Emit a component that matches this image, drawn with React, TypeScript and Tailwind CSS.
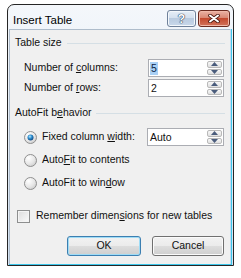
import React from 'react'

const FONT = "font-['Liberation_Sans',Arial,sans-serif]"

function Arrow({ up }: { up?: boolean }) {
  return (
    <svg width="7" height="4" viewBox="0 0 7 4">
      <path d={up ? 'M0 4 L3.5 0 L7 4 Z' : 'M0 0 L3.5 4 L7 0 Z'} fill="#4a5c7c" />
    </svg>
  )
}

function Spin({ value, selected, wide }: { value: string; selected?: boolean; wide?: boolean }) {
  return (
    <div className={`flex h-[18px] border border-[#abadb3] bg-white ${wide ? 'w-[77px]' : 'w-[76px]'}`}>
      <div className="flex flex-1 items-center pl-[1px]">
        <span className={selected ? 'bg-[#a9d0f5] px-[1px] leading-[13px] text-[#0b1f46]' : 'px-[1px] leading-[13px]'}>{value}</span>
      </div>
      <div className="flex w-[16px] flex-col gap-[1px] py-[1px] pr-[1px]">
        <div className="flex flex-1 items-center justify-center rounded-[2px] border border-[#b9b9b9] bg-gradient-to-b from-[#f8f8f8] to-[#e0e0e0]">
          <Arrow up />
        </div>
        <div className="flex flex-1 items-center justify-center rounded-[2px] border border-[#b9b9b9] bg-gradient-to-b from-[#f8f8f8] to-[#e0e0e0]">
          <Arrow />
        </div>
      </div>
    </div>
  )
}

function GroupHeader({ children }: { children: React.ReactNode }) {
  return (
    <div className="flex h-[14px] items-center gap-[5px] pl-[5px] pr-[5px]">
      <span>{children}</span>
      <div className="h-px flex-1 bg-[#d5dfe5]" />
    </div>
  )
}

function Radio({ checked }: { checked?: boolean }) {
  const id = checked ? 'rOn' : 'rOff'
  return (
    <svg width="13" height="13" viewBox="0 0 13 13">
      <defs>
        <radialGradient id={id + 'bg'} cx="0.35" cy="0.3" r="0.8">
          <stop offset="0" stopColor="#ffffff" />
          <stop offset="0.6" stopColor="#e6e6e6" />
          <stop offset="1" stopColor="#c9c9c9" />
        </radialGradient>
        <radialGradient id={id + 'dot'} cx="0.4" cy="0.35" r="0.7">
          <stop offset="0" stopColor="#b6e8fb" />
          <stop offset="0.45" stopColor="#2e8fd0" />
          <stop offset="1" stopColor="#0c3f78" />
        </radialGradient>
      </defs>
      <circle cx="6.5" cy="6.5" r="6" fill={`url(#${id}bg)`} stroke="#8f8f8f" />
      {checked && <circle cx="6.5" cy="6.5" r="3" fill={`url(#${id}dot)`} />}
    </svg>
  )
}

function U({ children }: { children: React.ReactNode }) {
  return <span className="underline underline-offset-[1px]">{children}</span>
}

export default function App() {
  return (
    <div className={`h-[278px] w-[241px] bg-white pl-[7px] pt-[4px] text-[10.5px] text-[#111] ${FONT}`}>
      <div className="flex h-[262px] w-[227px] flex-col rounded-t-[7px] border border-[#262626] bg-gradient-to-b from-[#f4f7fb] to-[#d3e2f2]">
        {/* Title bar */}
        <div className="flex h-[24px] items-start justify-between pl-[5px] pr-[3px]">
          <span className="mt-[8px] text-[11.5px] leading-[14px] text-black">Insert Table</span>
          <div className="mt-[5px] flex gap-[2px]">
            <div className="flex h-[17px] w-[29px] items-center justify-center rounded-[3px] border border-[#6f819a] bg-[linear-gradient(#e6eef7,#d2dfee_50%,#b9cbe0_50%,#c9d8ea)] shadow-[inset_0_0_0_1px_#f3f7fb]">
              <span className="text-[12px] font-bold leading-[12px] text-white [text-shadow:0_0_1px_#2c3e57,0_0_1px_#2c3e57,0_0_1px_#2c3e57]">?</span>
            </div>
            <div className="flex h-[17px] w-[32px] items-center justify-center rounded-[3px] border border-[#6b2a1f] bg-[linear-gradient(#eab2a4,#d8846f_50%,#c44a2f_50%,#d2735a)] shadow-[inset_0_0_0_1px_#f0b8a8]">
              <svg width="12" height="9" viewBox="0 0 12 9">
                <path d="M2 1.5 L10 7.5 M10 1.5 L2 7.5" stroke="#4a1810" strokeWidth="3.6" strokeLinecap="round" />
                <path d="M2 1.5 L10 7.5 M10 1.5 L2 7.5" stroke="#ffffff" strokeWidth="2" strokeLinecap="round" />
              </svg>
            </div>
          </div>
        </div>

        {/* Client area */}
        <div className="flex flex-1 pl-[1px] pr-[1px]">
          <div className="flex flex-1 border-b border-r border-[#3cc6ea] bg-[#c3dbf0] pr-[1px]">
            <div className="flex flex-1 flex-col border-l border-t border-[#aebccb] bg-[#f0f0f0]">
              <div className="mt-[6px]">
                <GroupHeader>Table size</GroupHeader>
              </div>
              <div className="mt-[9px] flex items-center justify-between pl-[14px] pr-[6px]">
                <span>Number of <U>c</U>olumns:</span>
                <Spin value="5" selected />
              </div>
              <div className="mt-[2px] flex items-center justify-between pl-[14px] pr-[6px]">
                <span>Number of <U>r</U>ows:</span>
                <Spin value="2" />
              </div>

              <div className="mt-[9px]">
                <GroupHeader>AutoFit b<U>e</U>havior</GroupHeader>
              </div>
              <div className="mt-[8px] flex h-[18px] items-center pl-[14px] pr-[6px]">
                <Radio checked />
                <span className="ml-[5px] flex-1">Fixed column <U>w</U>idth:</span>
                <Spin value="Auto" wide />
              </div>
              <div className="mt-[5px] flex h-[18px] items-center pl-[14px]">
                <Radio />
                <span className="ml-[5px]">Auto<U>F</U>it to contents</span>
              </div>
              <div className="mt-[5px] flex h-[18px] items-center pl-[14px]">
                <Radio />
                <span className="ml-[5px]">AutoFit to win<U>d</U>ow</span>
              </div>

              <div className="mt-[15px] flex h-[18px] items-center pl-[7px]">
                <div className="h-[13px] w-[13px] border border-[#8e8f8f] bg-gradient-to-br from-[#dcdcdc] to-[#fbfbfb] shadow-[inset_0_0_0_1px_#f4f4f4]" />
                <span className="ml-[6px]">Remember dimen<U>s</U>ions for new tables</span>
              </div>

              <div className="mt-[11px] flex justify-end gap-[11px] pr-[6px]">
                <div className="flex h-[20px] w-[74px] items-center justify-center rounded-[3px] border border-[#3c7fb1] bg-[linear-gradient(#f2f2f2,#ebebeb_50%,#dddddd_50%,#cfcfcf)] shadow-[inset_0_0_0_1px_#9fdcf6]">
                  OK
                </div>
                <div className="flex h-[20px] w-[72px] items-center justify-center rounded-[3px] border border-[#707070] bg-[linear-gradient(#f2f2f2,#ebebeb_50%,#dddddd_50%,#cfcfcf)] shadow-[inset_0_0_0_1px_#fbfbfb]">
                  Cancel
                </div>
              </div>
            </div>
          </div>
        </div>
      </div>
    </div>
  )
}
